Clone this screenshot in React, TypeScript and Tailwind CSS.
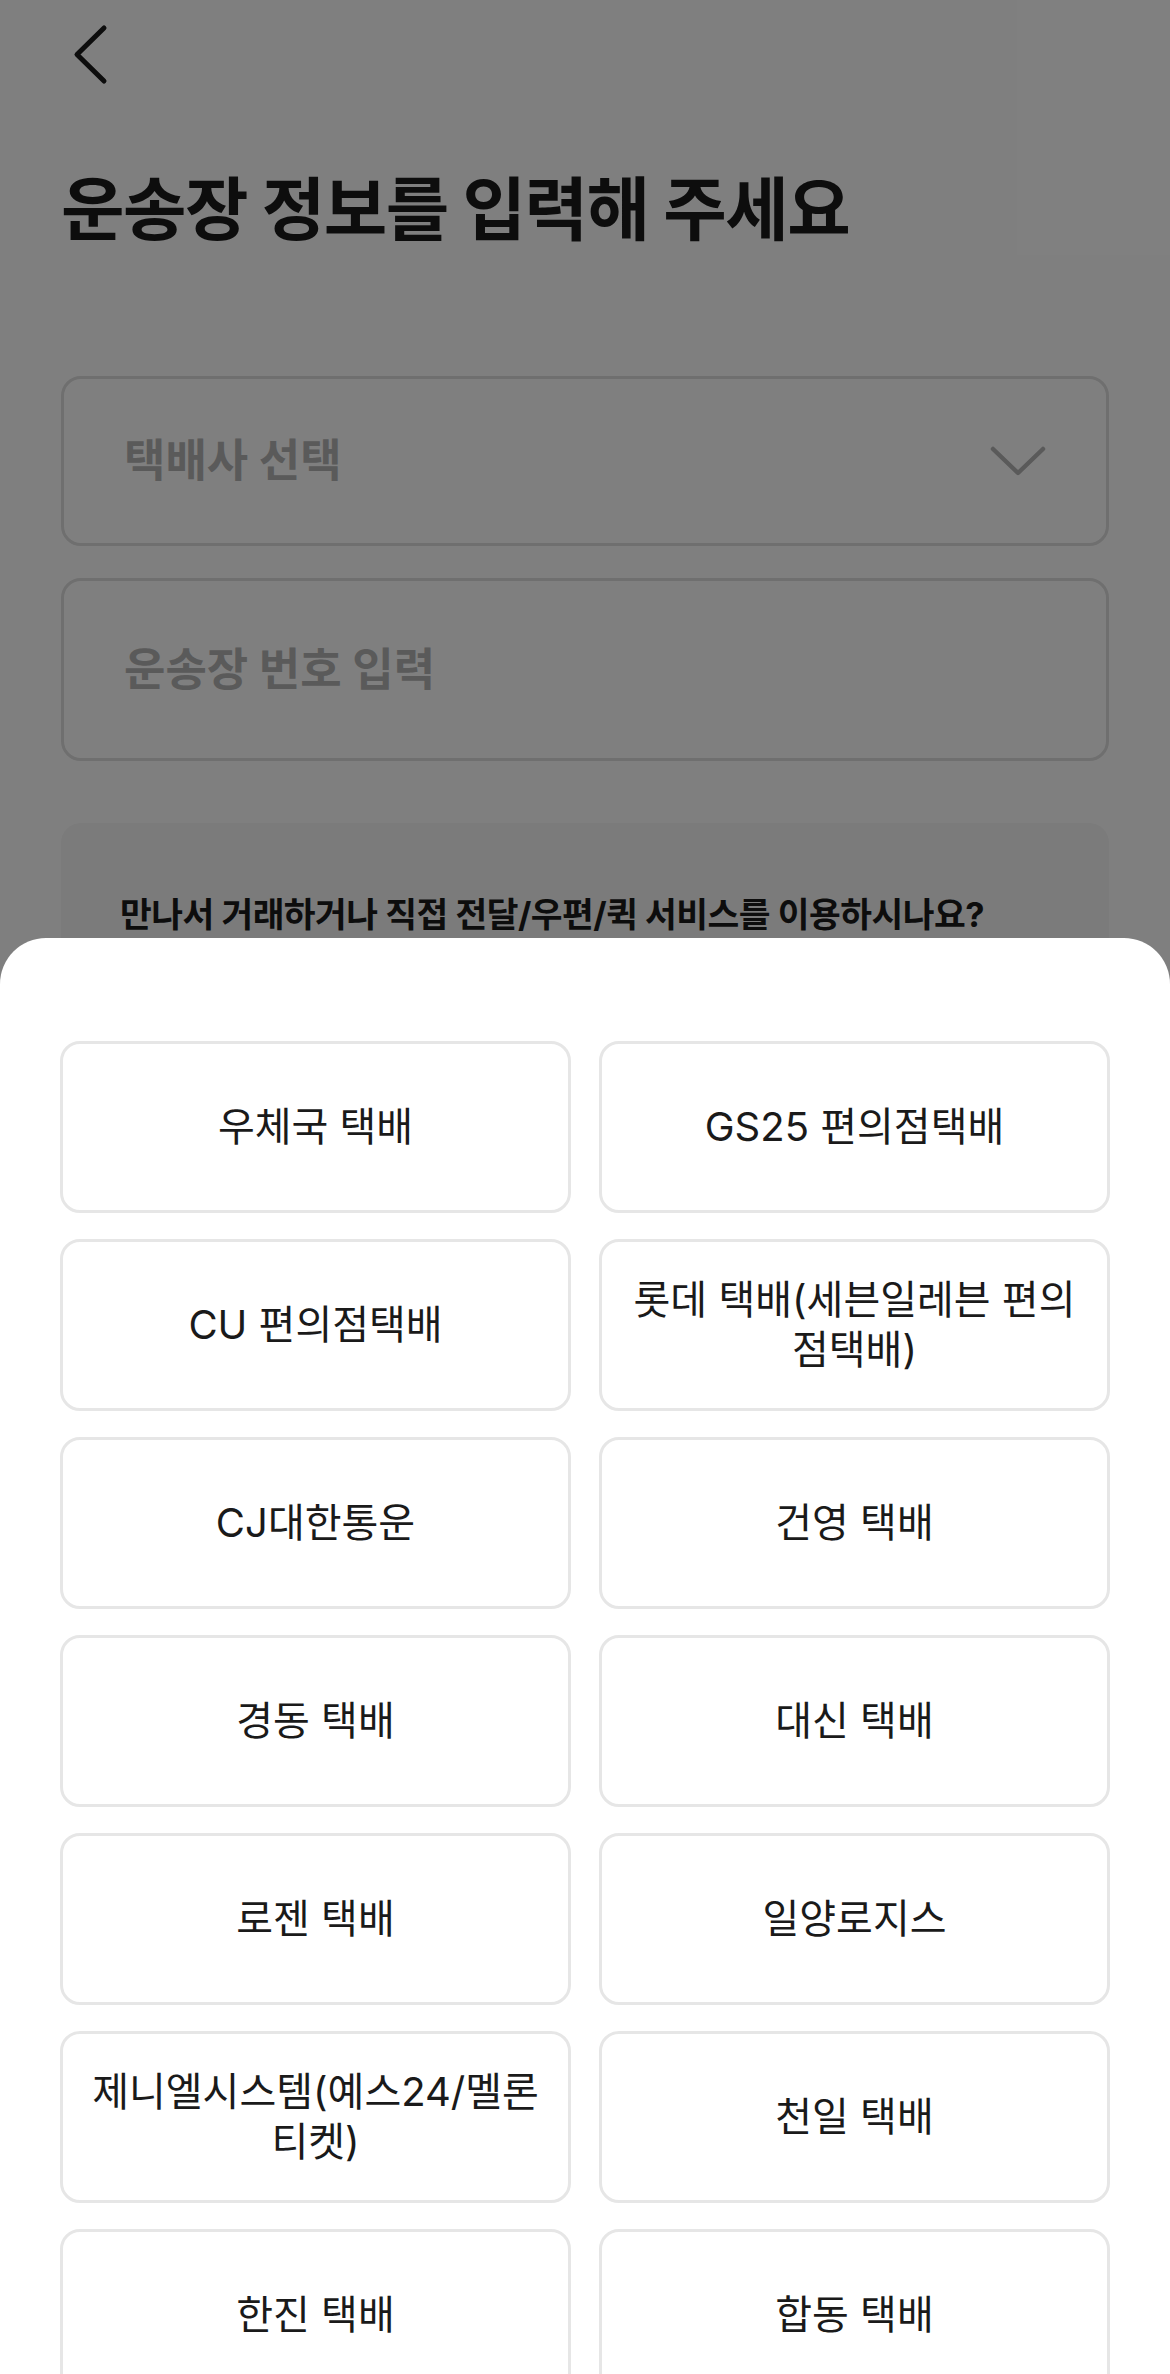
import React from 'react'

// 택배사 목록 (두 줄은 배열로)
const couriers: string[][] = [
  ['우체국 택배'],
  ['GS25 편의점택배'],
  ['CU 편의점택배'],
  ['롯데 택배(세븐일레븐 편의', '점택배)'],
  ['CJ대한통운'],
  ['건영 택배'],
  ['경동 택배'],
  ['대신 택배'],
  ['로젠 택배'],
  ['일양로지스'],
  ['제니엘시스템(예스24/멜론', '티켓)'],
  ['천일 택배'],
  ['한진 택배'],
  ['합동 택배'],
]

const font = { fontFamily: '"Inter", "Noto Sans CJK KR", sans-serif' }

const BackIcon = () => (
  <svg width="40" height="62" viewBox="0 0 40 62" fill="none">
    <path d="M32 4 L5 30.5 L32 57" stroke="#1a1a1a" strokeWidth="5" strokeLinecap="round" strokeLinejoin="round" />
  </svg>
)

const ChevronDown = () => (
  <svg width="56" height="30" viewBox="0 0 56 30" fill="none">
    <path d="M3 3 L28 27 L53 3" stroke="#b5b5b5" strokeWidth="4.5" strokeLinecap="round" strokeLinejoin="round" />
  </svg>
)

const App = () => {
  return (
    <div className="relative h-[2374px] w-full overflow-hidden bg-white text-[#1a1a1a]" style={font}>
      {/* 페이지 본문 */}
      <div className="pl-[72px] pt-[24px]">
        <BackIcon />
      </div>

      <div className="px-[61px]">
        <h1 className="mt-[84px] text-[69px] font-bold leading-[80px] tracking-[-1.5px]">운송장 정보를 입력해 주세요</h1>

        <div className="mt-[126px] flex h-[170px] items-center justify-between rounded-[20px] border-[3px] border-[#dedede] pl-[60px] pr-[60px]">
          <span className="text-[45px] font-bold text-[#b5b5b5]">택배사 선택</span>
          <ChevronDown />
        </div>

        <div className="mt-[32px] flex h-[183px] items-center rounded-[20px] border-[3px] border-[#dedede] pl-[60px]">
          <span className="text-[45px] font-bold text-[#b5b5b5]">운송장 번호 입력</span>
        </div>

        <div className="mt-[62px] h-[300px] rounded-[20px] bg-[#f6f6f6] pl-[59px] pt-[72px]">
          <p className="text-[34.5px] font-bold leading-[40px] tracking-[-0.5px]">만나서 거래하거나 직접 전달/우편/퀵 서비스를 이용하시나요?</p>
        </div>
      </div>

      {/* 딤 처리 */}
      <div className="absolute inset-0 bg-black/50" />

      {/* 바텀시트 */}
      <div className="absolute inset-x-0 top-[938px] bottom-0 rounded-t-[46px] bg-white px-[60px] pt-[103px]">
        <div className="grid grid-cols-2 gap-x-[28px] gap-y-[26px]">
          {couriers.map((lines) => (
            <button
              key={lines.join('')}
              className="flex h-[172px] flex-col items-center justify-center rounded-[20px] border-[3px] border-[#e6e6e6] bg-white px-[16px] text-center text-[40px] leading-[50px] text-[#1a1a1a]"
            >
              {lines.map((line) => (
                <span key={line} className="whitespace-nowrap">{line}</span>
              ))}
            </button>
          ))}
        </div>
      </div>
    </div>
  )
}

export default App
